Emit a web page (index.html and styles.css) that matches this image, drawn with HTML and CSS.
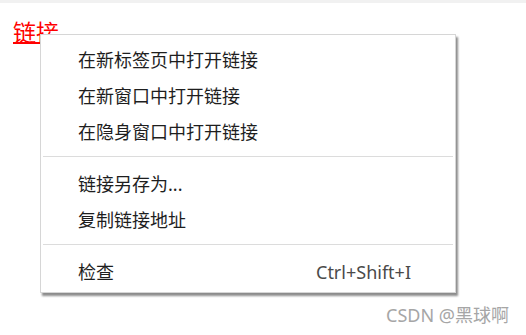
FILE: index.html
```html
<!DOCTYPE html>
<html lang="zh-CN">
<head>
    <meta charset="UTF-8">
    <meta name="viewport" content="width=device-width, initial-scale=1.0">
    <title>右键菜单</title>
    <link rel="stylesheet" href="styles.css">
</head>
<body>
    <div class="topbar"></div>
    <div class="page">
        <a class="link" href="#">链接</a>

        <div class="context-menu">
            <div class="menu-item">在新标签页中打开链接</div>
            <div class="menu-item">在新窗口中打开链接</div>
            <div class="menu-item">在隐身窗口中打开链接</div>
            <div class="menu-sep"></div>
            <div class="menu-item">链接另存为...</div>
            <div class="menu-item">复制链接地址</div>
            <div class="menu-sep"></div>
            <div class="menu-item">
                <span>检查</span>
                <span class="shortcut">Ctrl+Shift+I</span>
            </div>
        </div>
    </div>

    <div class="watermark">CSDN @黑球啊</div>
</body>
</html>
```

FILE: styles.css
```css
html, body {
    margin: 0;
    padding: 0;
}

body {
    font-family: "Noto Sans", "Noto Sans CJK SC", sans-serif;
    background-color: #fff;
    width: 526px;
    height: 335px;
    position: relative;
    overflow: hidden;
}

.topbar {
    height: 3px;
    background-color: #f1f1f1;
}

.page {
    padding: 16px 0 0 13px;
}

.link {
    font-family: "Noto Sans CJK SC", sans-serif;
    font-size: 23px;
    line-height: 24px;
    color: #ff0000;
    text-decoration: underline;
    text-decoration-thickness: 2px;
    text-underline-offset: 1px;
}

.context-menu {
    position: absolute;
    left: 40px;
    top: 34px;
    width: 414px;
    padding: 7px 0 2px;
    background-color: #fff;
    border: 1px solid #d6d6d6;
    box-shadow: 2px 3px 2px rgba(0, 0, 0, 0.45);
    font-size: 18px;
    color: #1e1e1e;
}

.menu-item {
    display: flex;
    justify-content: space-between;
    align-items: center;
    height: 36px;
    padding: 0 44px 0 37px;
    line-height: 36px;
}

.shortcut {
    color: #4a4a4a;
}

.menu-sep {
    height: 1px;
    margin: 6px 2px 9px;
    background-color: #dcdcdc;
}

.watermark {
    position: absolute;
    right: 17px;
    bottom: 8px;
    font-size: 18px;
    color: #a6a6a6;
}
```
